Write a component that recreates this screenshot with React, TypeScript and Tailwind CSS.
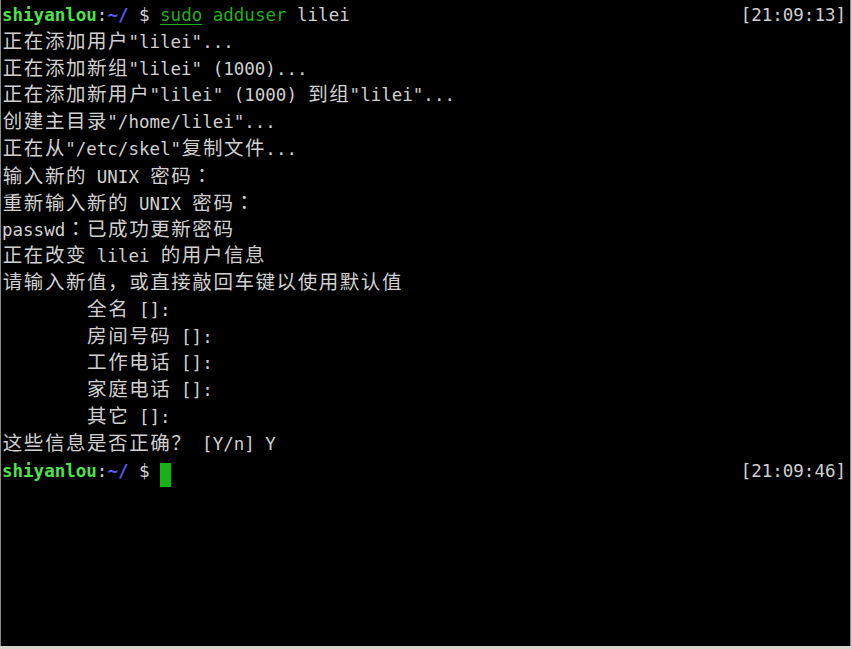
import React from "react";

const isWide = (ch: string) => /[\u3000-\u9fff\uff00-\uffef]/.test(ch);

// render text on a terminal grid: CJK chars take two cells
function Cells({ text }: { text: string }) {
  const out: React.ReactNode[] = [];
  let buf = "";
  Array.from(text).forEach((ch, i) => {
    if (isWide(ch)) {
      if (buf) {
        out.push(buf);
        buf = "";
      }
      const centered = ch === "：";
      out.push(
        <span key={i} className="inline-block w-[2ch] text-center">
          <span
            className="text-[19.5px]"
            style={centered ? { fontFamily: '"Noto Sans CJK TC", sans-serif' } : undefined}
          >
            {ch}
          </span>
        </span>
      );
    } else {
      buf += ch;
    }
  });
  if (buf) out.push(buf);
  return <>{out}</>;
}

function Prompt() {
  return (
    <>
      <span className="font-bold text-[#4fe24f]">shiyanlou</span>
      <span className="text-[#d0d0d0]">:</span>
      <span className="font-bold text-[#5a5aff]">~/</span>
      <span className="text-[#d0d0d0]"> $ </span>
    </>
  );
}

const output: string[] = [
  '正在添加用户"lilei"...',
  '正在添加新组"lilei" (1000)...',
  '正在添加新用户"lilei" (1000) 到组"lilei"...',
  '创建主目录"/home/lilei"...',
  '正在从"/etc/skel"复制文件...',
  "输入新的 UNIX 密码：",
  "重新输入新的 UNIX 密码：",
  "passwd：已成功更新密码",
  "正在改变 lilei 的用户信息",
  "请输入新值，或直接敲回车键以使用默认值",
  "        全名 []:",
  "        房间号码 []:",
  "        工作电话 []:",
  "        家庭电话 []:",
  "        其它 []:",
  "这些信息是否正确？ [Y/n] Y",
];

function Line({ children, right }: { children: React.ReactNode; right?: string }) {
  return (
    <div className="flex h-[26.8px] items-center justify-between whitespace-pre">
      <div>{children}</div>
      {right && <div className="pr-[4px]">{right}</div>}
    </div>
  );
}

export default function App() {
  return (
    <div className="h-[649px] w-[852px] bg-[#d5d5cd]">
      <div
        className="h-[646px] w-[851px] border-l border-r border-[#8a8a86] bg-black pl-[1px] pt-[2px] text-[17.5px] leading-[26.8px] text-[#d0d0d0]"
        style={{ fontFamily: '"DejaVu Sans Mono", "Noto Sans CJK SC", monospace' }}
      >
        <Line right="[21:09:13]">
          <Prompt />
          <span className="text-[#1fae1f] underline decoration-1 underline-offset-[3px]">sudo</span>
          <span className="text-[#1fae1f]"> adduser</span>
          <span> lilei</span>
        </Line>
        {output.map((l, i) => (
          <Line key={i}>
            <Cells text={l} />
          </Line>
        ))}
        <Line right="[21:09:46]">
          <Prompt />
          <span className="inline-block h-[24px] w-[11px] translate-y-[3px] bg-[#17b217] align-bottom" />
        </Line>
      </div>
    </div>
  );
}
